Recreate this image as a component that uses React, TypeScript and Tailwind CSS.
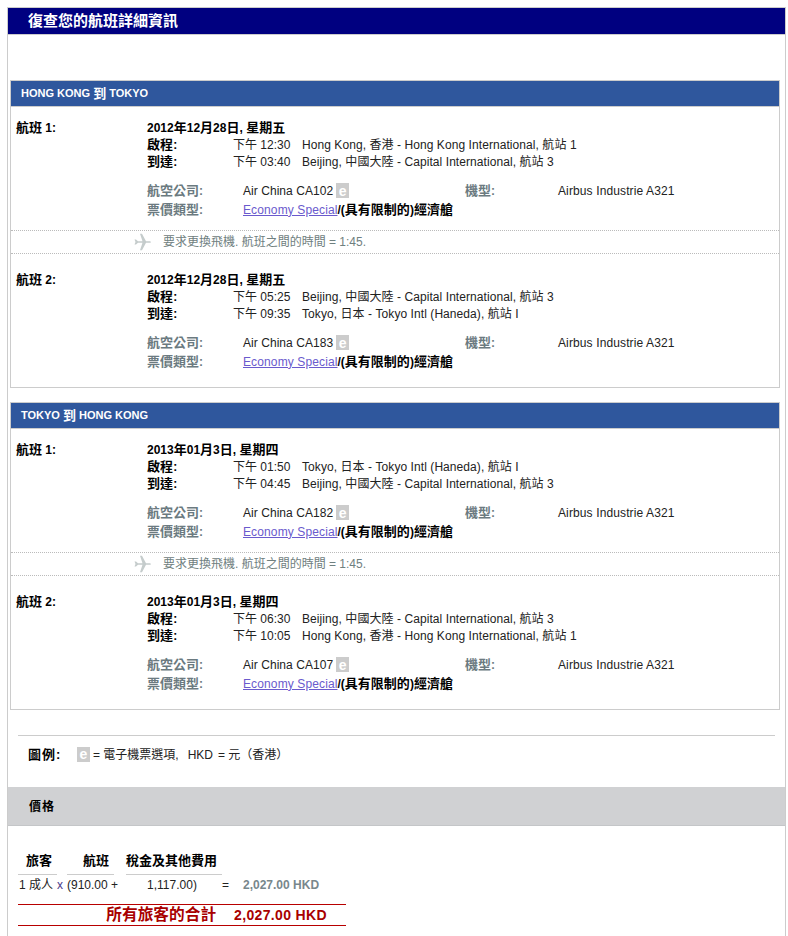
import React from "react";

const FONT = "[font-family:'Liberation_Sans','Noto_Sans_CJK_TC',sans-serif]";

function Z({ t }: { t: string }) {
  const parts = t.split(/([\u4e00-\u9fff]+)/);
  return (
    <>
      {parts.map((p, i) =>
        i % 2 === 1 ? (
          <span key={i} className="text-[13px]">
            {p}
          </span>
        ) : (
          <React.Fragment key={i}>{p}</React.Fragment>
        )
      )}
    </>
  );
}

function EBadge() {
  return (
    <span className="ml-[3px] inline-flex h-[15px] w-[13px] items-center justify-center bg-[#cccccc] text-[14px] leading-none font-bold tracking-normal text-white">
      e
    </span>
  );
}

function Plane() {
  return (
    <svg width="18" height="18" viewBox="0 0 18 18" className="shrink-0">
      <path
        d="M0.5 6.5 L2 6.5 L4 8.2 L8.5 8.2 L6 0.8 L8 0.8 L12 8.2 L16 8.2 Q18 9 16 9.8 L12 9.8 L8 17.2 L6 17.2 L8.5 9.8 L4 9.8 L2 11.5 L0.5 11.5 L1.5 9 Z"
        fill="#c5cccc"
      />
    </svg>
  );
}

type Leg = {
  label: string;
  date: string;
  depTime: string;
  dep: string;
  arrTime: string;
  arr: string;
  flight: string;
};

function Flight({ leg, top }: { leg: Leg; top: string }) {
  return (
    <div className={`flex pl-[5px] ${top}`}>
      <div className="w-[131px] shrink-0 text-[12px] leading-[15px] font-bold text-black">
        <Z t={leg.label} />
      </div>
      <div className="min-w-0 flex-1">
        <div className="h-[17px] text-[12px] leading-[15px] font-bold text-black">
          <Z t={leg.date} />
        </div>
        <div className="flex h-[17px] text-[12px] leading-[17px] tracking-[0.07px] text-[#222]">
          <span className="w-[86px] shrink-0 leading-[15px] font-bold text-black">
            <Z t="啟程:" />
          </span>
          <span className="w-[69px] shrink-0 tracking-normal">下午 {leg.depTime}</span>
          <span>{leg.dep}</span>
        </div>
        <div className="flex h-[17px] text-[12px] leading-[17px] tracking-[0.07px] text-[#222]">
          <span className="w-[86px] shrink-0 leading-[15px] font-bold text-black">
            <Z t="到達:" />
          </span>
          <span className="w-[69px] shrink-0 tracking-normal">下午 {leg.arrTime}</span>
          <span>{leg.arr}</span>
        </div>
        <div className="mt-[10px] flex h-[19px] items-center text-[12px] text-[#222]">
          <span className="w-[96px] shrink-0 font-bold text-[#6b7a80]">
            <Z t="航空公司:" />
          </span>
          <span className="flex w-[222px] shrink-0 items-center tracking-[0.05px]">
            {leg.flight}
            <EBadge />
          </span>
          <span className="w-[93px] shrink-0 font-bold text-[#6b7a80]">
            <Z t="機型:" />
          </span>
          <span className="tracking-[0.12px]">Airbus Industrie A321</span>
        </div>
        <div className="flex h-[19px] items-center text-[12px]">
          <span className="w-[96px] shrink-0 font-bold text-[#6b7a80]">
            <Z t="票價類型:" />
          </span>
          <span className="font-bold text-black">
            <a className="font-normal tracking-[0.12px] text-[#6a5acd] underline">Economy Special</a>
            <Z t="/(具有限制的)經濟艙" />
          </span>
        </div>
      </div>
    </div>
  );
}

function Connection() {
  return (
    <div className="mt-[11px] flex h-[24px] items-center border-y border-dotted border-[#bbbbbb] pl-[123px]">
      <Plane />
      <span className="ml-[11px] text-[12px] text-[#6f8080]">要求更換飛機. 航班之間的時間 = 1:45.</span>
    </div>
  );
}

function Section({ title, first, second }: { title: string; first: Leg; second: Leg }) {
  return (
    <section className="border border-[#cccccc]">
      <div className="flex h-[25px] items-center bg-[#2f579d] pl-[10px] text-[11px] font-bold whitespace-pre text-white">
        <Z t={title} />
      </div>
      <div className="border-t border-[#cccccc]">
        <Flight leg={first} top="pt-[13px]" />
        <Connection />
        <Flight leg={second} top="pt-[18px]" />
        <div className="h-[16px]" />
      </div>
    </section>
  );
}

const hkg = "Hong Kong, 香港 - Hong Kong International, 航站 1";
const pek = "Beijing, 中國大陸 - Capital International, 航站 3";
const hnd = "Tokyo, 日本 - Tokyo Intl (Haneda), 航站 I";

export default function App() {
  return (
    <div className={`h-[936px] w-[788px] overflow-hidden bg-white pt-[7px] pl-[7px] ${FONT}`}>
      <div className="h-[929px] w-[779px] border-x border-t border-[#cccccc]">
        <div className="flex h-[27px] items-center border-b border-[#cccccc] bg-[#000080] pl-[20px] text-[15px] font-bold text-white">
          復查您的航班詳細資訊
        </div>
        <div className="flex flex-col gap-[14px] pt-[45px] pr-[5px] pl-[2px]">
          <Section
            title="HONG KONG 到 TOKYO"
            first={{ label: "航班 1:", date: "2012年12月28日, 星期五", depTime: "12:30", dep: hkg, arrTime: "03:40", arr: pek, flight: "Air China CA102" }}
            second={{ label: "航班 2:", date: "2012年12月28日, 星期五", depTime: "05:25", dep: pek, arrTime: "09:35", arr: hnd, flight: "Air China CA183" }}
          />
          <Section
            title="TOKYO 到 HONG KONG"
            first={{ label: "航班 1:", date: "2013年01月3日, 星期四", depTime: "01:50", dep: hnd, arrTime: "04:45", arr: pek, flight: "Air China CA182" }}
            second={{ label: "航班 2:", date: "2013年01月3日, 星期四", depTime: "06:30", dep: pek, arrTime: "10:05", arr: hkg, flight: "Air China CA107" }}
          />
        </div>
        <div className="mt-[25px] mr-[10px] ml-[10px] flex h-[37px] items-center border-t border-[#cccccc] pt-[1px] pl-[10px] text-[12px] text-[#222]">
          <span className="w-[49px] text-[13px] font-bold tracking-[1px] text-black">圖例:</span>
          <span className="inline-flex h-[15px] w-[13px] items-center justify-center bg-[#cccccc] text-[14px] font-bold text-white">e</span>
          <span className="ml-[3px]">= 電子機票選項,</span>
          <span className="ml-[9px] text-[#222]">HKD</span>
          <span className="ml-[5px]">= 元（香港）</span>
        </div>
        <div className="mt-[15px] flex h-[39px] items-center border-b border-[#c4c6c8] bg-[#d0d1d3] pt-[1px] pl-[21px] text-[12px] font-bold tracking-[1px] text-black">
          價格
        </div>
        <div className="ml-[10px] w-[328px] pt-[27px] text-[12px] text-[#222]">
          <div className="flex h-[22px] items-end text-[13px] leading-[16px] font-bold text-black">
            <span className="w-[39px] border-b border-[#cccccc] pb-[5px] pl-[8px]">旅客</span>
            <span className="ml-[10px] w-[47px] border-b border-[#cccccc] pb-[5px] pl-[16px]">航班</span>
            <span className="ml-[12px] w-[96px] border-b border-[#cccccc] pb-[5px]">稅金及其他費用</span>
          </div>
          <div className="flex h-[19px] items-center">
            <span className="w-[39px] pl-[1px]">1 成人</span>
            <span className="w-[10px] text-[#4b3a8a]">x</span>
            <span className="w-[59px] whitespace-nowrap">(910.00 +</span>
            <span className="w-[96px] pr-[4px] text-center">1,117.00)</span>
            <span className="w-[21px]">=</span>
            <span className="font-bold text-[#78878c]">2,027.00 HKD</span>
          </div>
          <div className="mt-[10px] flex h-[22px] items-center justify-end gap-[18px] border-y border-[#b80000] pr-[19px] text-[14px] font-bold tracking-[0.35px] text-[#a80000]">
            <span className="text-[15.7px] tracking-normal">所有旅客的合計</span>
            <span>2,027.00 HKD</span>
          </div>
        </div>
      </div>
    </div>
  );
}
